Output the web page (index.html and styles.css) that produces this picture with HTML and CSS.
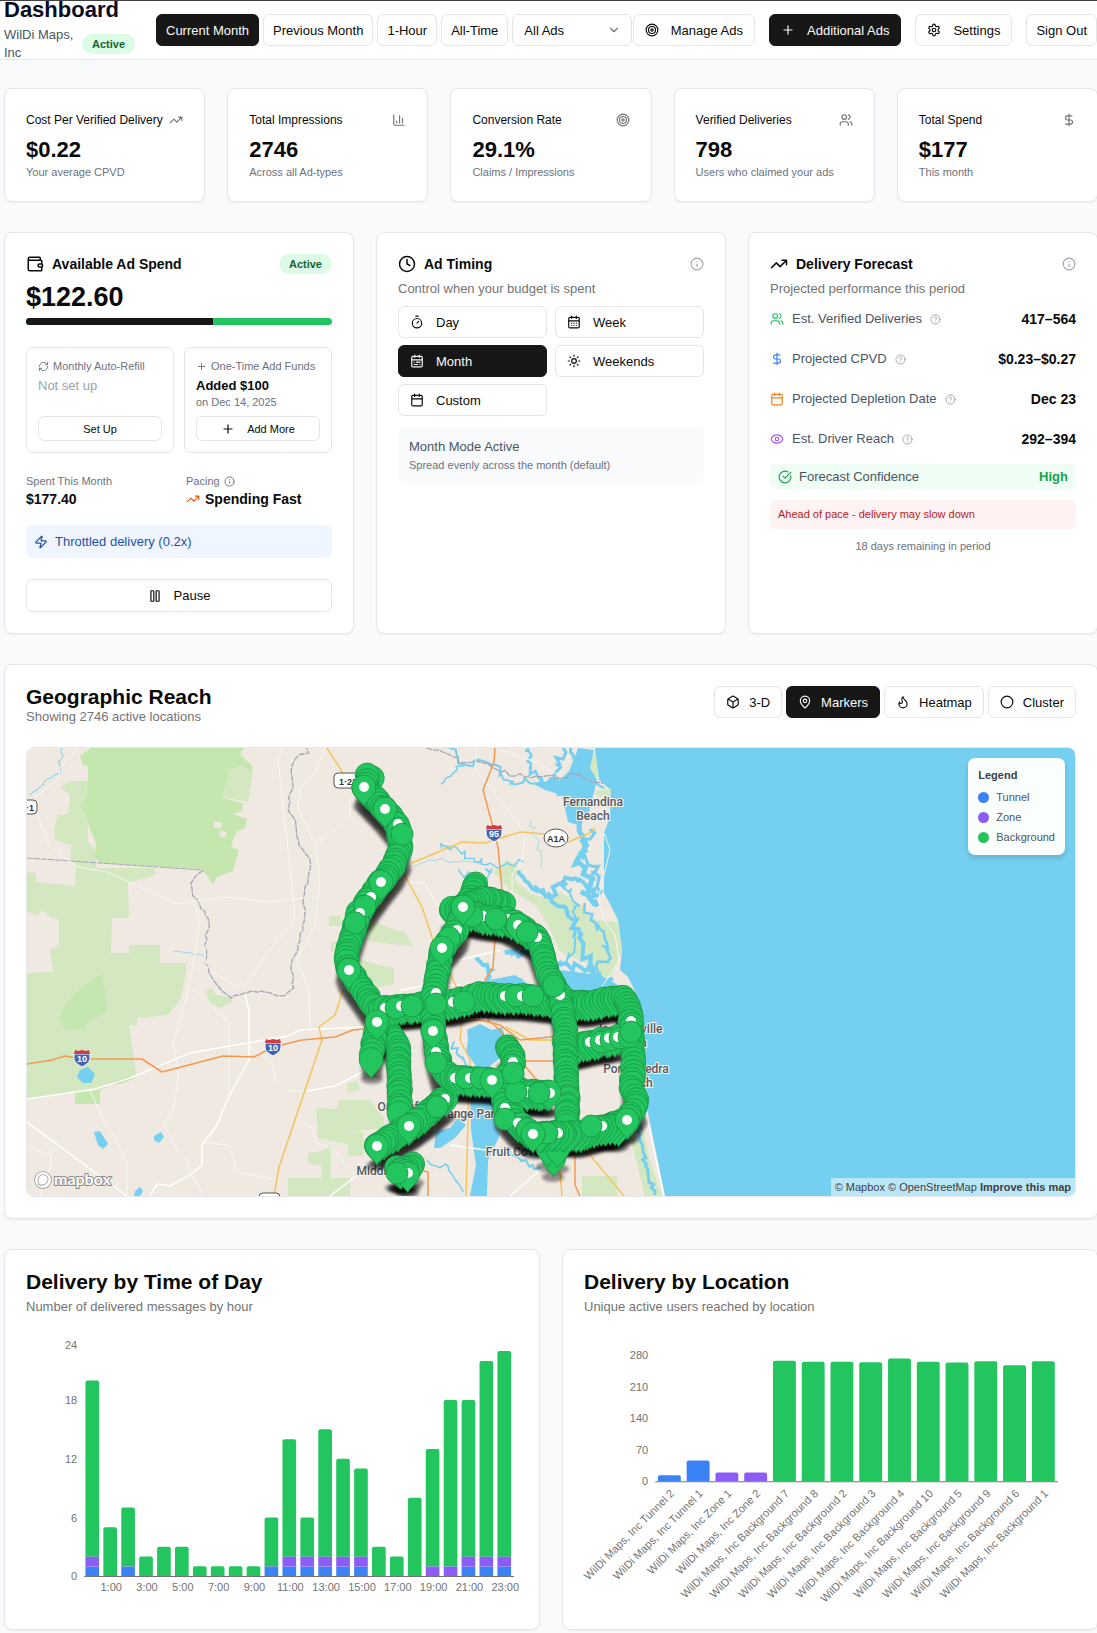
FILE: index.html
```
<!DOCTYPE html>
<html lang="en">

<head>
    <meta charset="utf-8" />
    <title>Dashboard</title>
    <meta name="viewport" content="width=device-width, initial-scale=1.0">
    <link rel="stylesheet" href="styles.css">
</head>

<body>
    <!-- Icon sprite -->
    <svg class="sprite" aria-hidden="true">
        <symbol id="trend" viewBox="0 0 24 24"><path d="M22 7 13.5 15.5 8.5 10.5 2 17M16 7h6v6" /></symbol>
        <symbol id="bars" viewBox="0 0 24 24"><path d="M3 3v16a2 2 0 0 0 2 2h16M18 17V9M13 17V5M8 17v-3" /></symbol>
        <symbol id="target" viewBox="0 0 24 24"><circle cx="12" cy="12" r="10" /><circle cx="12" cy="12" r="6" /><circle cx="12" cy="12" r="2" /></symbol>
        <symbol id="users" viewBox="0 0 24 24"><path d="M16 21v-2a4 4 0 0 0-4-4H6a4 4 0 0 0-4 4v2" /><circle cx="9" cy="7" r="4" /><path d="M22 21v-2a4 4 0 0 0-3-3.87M16 3.13a4 4 0 0 1 0 7.75" /></symbol>
        <symbol id="dollar" viewBox="0 0 24 24"><path d="M12 2v20M17 5H9.5a3.5 3.5 0 0 0 0 7h5a3.5 3.5 0 0 1 0 7H6" /></symbol>
        <symbol id="wallet" viewBox="0 0 24 24"><path d="M19 7V4a1 1 0 0 0-1-1H5a2 2 0 0 0 0 4h15a1 1 0 0 1 1 1v4h-3a2 2 0 0 0 0 4h3a1 1 0 0 0 1-1v-2a1 1 0 0 0-1-1M3 5v14a2 2 0 0 0 2 2h15a1 1 0 0 0 1-1v-4" /></symbol>
        <symbol id="refresh" viewBox="0 0 24 24"><path d="M3 12a9 9 0 0 1 9-9 9.75 9.75 0 0 1 6.74 2.74L21 8M21 3v5h-5M21 12a9 9 0 0 1-9 9 9.75 9.75 0 0 1-6.74-2.74L3 16M8 16H3v5" /></symbol>
        <symbol id="plus" viewBox="0 0 24 24"><path d="M5 12h14M12 5v14" /></symbol>
        <symbol id="info" viewBox="0 0 24 24"><circle cx="12" cy="12" r="10" /><path d="M12 16v-4M12 8h.01" /></symbol>
        <symbol id="help" viewBox="0 0 24 24"><circle cx="12" cy="12" r="10" /><path d="M9.09 9a3 3 0 0 1 5.83 1c0 2-3 3-3 3M12 17h.01" /></symbol>
        <symbol id="zap" viewBox="0 0 24 24"><path d="M4 14a1 1 0 0 1-.78-1.63l9.9-10.2a.5.5 0 0 1 .86.46l-1.92 6.02A1 1 0 0 0 13 10h7a1 1 0 0 1 .78 1.63l-9.9 10.2a.5.5 0 0 1-.86-.46l1.92-6.02A1 1 0 0 0 11 14z" /></symbol>
        <symbol id="pause" viewBox="0 0 24 24"><rect x="14" y="3" width="5" height="18" rx="1" /><rect x="5" y="3" width="5" height="18" rx="1" /></symbol>
        <symbol id="clock" viewBox="0 0 24 24"><circle cx="12" cy="12" r="10" /><path d="M12 6v6l4 2" /></symbol>
        <symbol id="timer" viewBox="0 0 24 24"><path d="M10 2h4M12 14l3-3" /><circle cx="12" cy="14" r="8" /></symbol>
        <symbol id="calendar" viewBox="0 0 24 24"><path d="M8 2v4M16 2v4M3 10h18" /><rect x="3" y="4" width="18" height="18" rx="2" /></symbol>
        <symbol id="calendar-days" viewBox="0 0 24 24"><path d="M8 2v4M16 2v4M3 10h18M8 14h.01M12 14h.01M16 14h.01M8 18h.01M12 18h.01M16 18h.01" /><rect x="3" y="4" width="18" height="18" rx="2" /></symbol>
        <symbol id="calendar-range" viewBox="0 0 24 24"><path d="M8 2v4M16 2v4M3 10h18M17 14h-6M13 18H7M7 14h.01M17 18h.01" /><rect x="3" y="4" width="18" height="18" rx="2" /></symbol>
        <symbol id="sun" viewBox="0 0 24 24"><circle cx="12" cy="12" r="4" /><path d="M12 2v2M12 20v2M4.93 4.93l1.41 1.41M17.66 17.66l1.41 1.41M2 12h2M20 12h2M6.34 17.66l-1.41 1.41M19.07 4.93l-1.41 1.41" /></symbol>
        <symbol id="eye" viewBox="0 0 24 24"><path d="M2.06 12.35a1 1 0 0 1 0-.7 10.75 10.75 0 0 1 19.88 0 1 1 0 0 1 0 .7 10.75 10.75 0 0 1-19.88 0" /><circle cx="12" cy="12" r="3" /></symbol>
        <symbol id="check" viewBox="0 0 24 24"><path d="M21.8 10A10 10 0 1 1 17 3.34M9 11l3 3L22 4" /></symbol>
        <symbol id="box" viewBox="0 0 24 24"><path d="M21 8a2 2 0 0 0-1-1.73l-7-4a2 2 0 0 0-2 0l-7 4A2 2 0 0 0 3 8v8a2 2 0 0 0 1 1.73l7 4a2 2 0 0 0 2 0l7-4A2 2 0 0 0 21 16ZM3.3 7l8.7 5 8.7-5M12 22V12" /></symbol>
        <symbol id="pin" viewBox="0 0 24 24"><path d="M20 10c0 5-5.54 10.2-7.4 11.8a1 1 0 0 1-1.2 0C9.54 20.2 4 15 4 10a8 8 0 0 1 16 0" /><circle cx="12" cy="10" r="3" /></symbol>
        <symbol id="flame" viewBox="0 0 24 24"><path d="M8.5 14.5A2.5 2.5 0 0 0 11 12c0-1.38-.5-2-1-3-1.07-2.14-.22-4.05 2-6 .5 2.5 2 4.9 4 6.5 2 1.6 3 3.5 3 5.5a7 7 0 1 1-14 0c0-1.15.43-2.29 1-3a2.5 2.5 0 0 0 2.5 2.5z" /></symbol>
        <symbol id="circle" viewBox="0 0 24 24"><circle cx="12" cy="12" r="10" /></symbol>
        <symbol id="chevron" viewBox="0 0 24 24"><path d="m6 9 6 6 6-6" /></symbol>
        <symbol id="gear" viewBox="0 0 24 24"><path d="M12.22 2h-.44a2 2 0 0 0-2 2v.18a2 2 0 0 1-1 1.73l-.43.25a2 2 0 0 1-2 0l-.15-.08a2 2 0 0 0-2.73.73l-.22.38a2 2 0 0 0 .73 2.73l.15.1a2 2 0 0 1 1 1.72v.51a2 2 0 0 1-1 1.74l-.15.09a2 2 0 0 0-.73 2.73l.22.38a2 2 0 0 0 2.73.73l.15-.08a2 2 0 0 1 2 0l.43.25a2 2 0 0 1 1 1.73V20a2 2 0 0 0 2 2h.44a2 2 0 0 0 2-2v-.18a2 2 0 0 1 1-1.73l.43-.25a2 2 0 0 1 2 0l.15.08a2 2 0 0 0 2.73-.73l.22-.39a2 2 0 0 0-.73-2.73l-.15-.08a2 2 0 0 1-1-1.74v-.5a2 2 0 0 1 1-1.74l.15-.09a2 2 0 0 0 .73-2.73l-.22-.38a2 2 0 0 0-2.73-.73l-.15.08a2 2 0 0 1-2 0l-.43-.25a2 2 0 0 1-1-1.73V4a2 2 0 0 0-2-2z" /><circle cx="12" cy="12" r="3" /></symbol>
    </svg>

    <header class="topbar">
        <div class="brand">
            <h1>Dashboard</h1>
            <div class="account">
                <span class="account-name">WilDi Maps, Inc</span>
                <span class="badge">Active</span>
            </div>
        </div>
        <div class="filters">
            <button class="btn dark">Current Month</button>
            <button class="btn">Previous Month</button>
            <button class="btn">1-Hour</button>
            <button class="btn">All-Time</button>
            <div class="select-wrap">
                <select class="btn" aria-label="Ad type">
                    <option>All Ads</option>
                </select>
                <svg class="icon muted"><use href="#chevron" /></svg>
            </div>
        </div>
        <div class="actions">
            <button class="btn with-icon"><svg class="icon"><use href="#target" /></svg>Manage Ads</button>
            <button class="btn with-icon dark"><svg class="icon"><use href="#plus" /></svg>Additional Ads</button>
            <button class="btn with-icon"><svg class="icon"><use href="#gear" /></svg>Settings</button>
            <button class="btn">Sign Out</button>
        </div>
    </header>

    <main>
        <!-- Stats -->
        <section class="row stats">
            <div class="card">
                <div class="stat-head">Cost Per Verified Delivery<svg class="icon muted"><use href="#trend" /></svg></div>
                <div class="stat-value">$0.22</div>
                <div class="small">Your average CPVD</div>
            </div>
            <div class="card">
                <div class="stat-head">Total Impressions<svg class="icon muted"><use href="#bars" /></svg></div>
                <div class="stat-value">2746</div>
                <div class="small">Across all Ad-types</div>
            </div>
            <div class="card">
                <div class="stat-head">Conversion Rate<svg class="icon muted"><use href="#target" /></svg></div>
                <div class="stat-value">29.1%</div>
                <div class="small">Claims / Impressions</div>
            </div>
            <div class="card">
                <div class="stat-head">Verified Deliveries<svg class="icon muted"><use href="#users" /></svg></div>
                <div class="stat-value">798</div>
                <div class="small">Users who claimed your ads</div>
            </div>
            <div class="card">
                <div class="stat-head">Total Spend<svg class="icon muted"><use href="#dollar" /></svg></div>
                <div class="stat-value">$177</div>
                <div class="small">This month</div>
            </div>
        </section>

        <section class="row">
            <!-- Ad spend -->
            <div class="card">
                <div class="card-head">
                    <svg class="icon large"><use href="#wallet" /></svg>
                    <h2>Available Ad Spend</h2>
                    <span class="badge">Active</span>
                </div>
                <div class="amount">$122.60</div>
                <div class="progress"><div class="progress-fill" style="width: 61%"></div></div>
                <div class="funds">
                    <div class="fund">
                        <div class="small"><svg class="icon tiny"><use href="#refresh" /></svg>Monthly Auto-Refill</div>
                        <div class="fund-value unset">Not set up</div>
                        <button class="btn compact">Set Up</button>
                    </div>
                    <div class="fund">
                        <div class="small"><svg class="icon tiny"><use href="#plus" /></svg>One-Time Add Funds</div>
                        <div class="fund-value">Added $100</div>
                        <div class="small">on Dec 14, 2025</div>
                        <button class="btn compact with-icon"><svg class="icon"><use href="#plus" /></svg>Add More</button>
                    </div>
                </div>
                <div class="pacing">
                    <div>
                        <div class="small">Spent This Month</div>
                        <div class="strong">$177.40</div>
                    </div>
                    <div>
                        <div class="small">Pacing<svg class="icon tiny"><use href="#info" /></svg></div>
                        <div class="strong"><svg class="icon fast"><use href="#trend" /></svg>Spending Fast</div>
                    </div>
                </div>
                <div class="throttled"><svg class="icon"><use href="#zap" /></svg>Throttled delivery (0.2x)</div>
                <button class="btn pause with-icon"><svg class="icon"><use href="#pause" /></svg>Pause</button>
            </div>

            <!-- Ad timing -->
            <div class="card">
                <div class="card-head">
                    <svg class="icon large"><use href="#clock" /></svg>
                    <h2>Ad Timing</h2>
                    <svg class="icon hint"><use href="#info" /></svg>
                </div>
                <p class="sub">Control when your budget is spent</p>
                <div class="timing">
                    <button class="btn with-icon"><svg class="icon"><use href="#timer" /></svg>Day</button>
                    <button class="btn with-icon"><svg class="icon"><use href="#calendar-days" /></svg>Week</button>
                    <button class="btn with-icon dark"><svg class="icon"><use href="#calendar-range" /></svg>Month</button>
                    <button class="btn with-icon"><svg class="icon"><use href="#sun" /></svg>Weekends</button>
                    <button class="btn with-icon"><svg class="icon"><use href="#calendar" /></svg>Custom</button>
                </div>
                <div class="mode">
                    <div>Month Mode Active</div>
                    <div class="small">Spread evenly across the month (default)</div>
                </div>
            </div>

            <!-- Forecast -->
            <div class="card">
                <div class="card-head">
                    <svg class="icon large"><use href="#trend" /></svg>
                    <h2>Delivery Forecast</h2>
                    <svg class="icon hint"><use href="#info" /></svg>
                </div>
                <p class="sub">Projected performance this period</p>
                <dl class="forecast">
                    <div>
                        <dt><svg class="icon green"><use href="#users" /></svg>Est. Verified Deliveries<svg class="icon tiny"><use href="#help" /></svg></dt>
                        <dd>417–564</dd>
                    </div>
                    <div>
                        <dt><svg class="icon blue"><use href="#dollar" /></svg>Projected CPVD<svg class="icon tiny"><use href="#help" /></svg></dt>
                        <dd>$0.23–$0.27</dd>
                    </div>
                    <div>
                        <dt><svg class="icon orange"><use href="#calendar" /></svg>Projected Depletion Date<svg class="icon tiny"><use href="#help" /></svg></dt>
                        <dd>Dec 23</dd>
                    </div>
                    <div>
                        <dt><svg class="icon purple"><use href="#eye" /></svg>Est. Driver Reach<svg class="icon tiny"><use href="#help" /></svg></dt>
                        <dd>292–394</dd>
                    </div>
                </dl>
                <div class="confidence"><svg class="icon"><use href="#check" /></svg>Forecast Confidence<b>High</b></div>
                <div class="warning">Ahead of pace - delivery may slow down</div>
                <div class="small remaining">18 days remaining in period</div>
            </div>
        </section>

        <!-- Map -->
        <section class="card">
            <div class="geo-head">
                <div>
                    <h2 class="title">Geographic Reach</h2>
                    <p class="sub">Showing 2746 active locations</p>
                </div>
                <div class="filters">
                    <button class="btn with-icon"><svg class="icon"><use href="#box" /></svg>3-D</button>
                    <button class="btn with-icon dark"><svg class="icon"><use href="#pin" /></svg>Markers</button>
                    <button class="btn with-icon"><svg class="icon"><use href="#flame" /></svg>Heatmap</button>
                    <button class="btn with-icon"><svg class="icon"><use href="#circle" /></svg>Cluster</button>
                </div>
            </div>
            <div class="map">
                <svg class="map-canvas" id="map" viewBox="27 748 1048 448" preserveAspectRatio="xMidYMid slice">
                    <defs>
                        <filter id="soft" x="-5%" y="-5%" width="110%" height="110%"><feGaussianBlur stdDeviation="1.5" /></filter>
                        <g id="shield">
                            <path class="shield-blue" d="M-8 -3V1C-8 6-3 8 0 10C3 8 8 6 8 1V-3Z" />
                            <path class="shield-red" d="M-8 -3L-7 -7 -4 -6 0 -7 4 -6 7 -7 8 -3Z" />
                        </g>
                    </defs>
                    <!-- Parks -->
                    <g class="park">
                        <path d="M60 787L70 781H88V842L96 850V868H77L70 858 71 845 55 840 54 828 58 815 68 814 70 795Z" />
                        <path d="M241 765L253 772 248 802 222 797 229 770Z" />
                        <path fill-rule="evenodd" d="M27 872L36 873V882L75 886 76 868 155 868V875L128 883 129 918H112L111 953H129V945H160V963H186V975L180 1000 172 1010 168 1015 137 1018V1025H129L136 1075 100 1090V1104H75V1093L27 1099ZM27 912L38 915 42 910 52 918 59 920V945L50 950 53 972 27 973Z" />
                        <path d="M205 990L212 988 216 995 230 997 232 1002 220 1008 210 1003Z" />
                        <path d="M329 916H341V926H329ZM340 935L365 928 375 922 395 930 405 932 413 946 390 944 370 941 362 937ZM331 942H342V952H331ZM357 958L375 964 394 968V984L375 988 350 975Z" />
                        <path d="M316 1108L337 1109 339 1100H370L384 1118V1128L350 1132V1145L333 1141 318 1138ZM308 1153L322 1151 331 1145V1178H322V1166L308 1163ZM348 1132H363V1156H348ZM288 1178H350V1196H288ZM582 1176H617V1196H582ZM347 1084L358 1081 360 1090 348 1093Z" />
                        <path d="M494 873L506 860 518 865 515 880 530 893 550 900 560 892 580 905 596 920 617 922 622 950 612 975 600 980 585 962 560 952 548 925 535 905 510 890ZM594 791L611 789V796L596 796ZM588 765L597 748V780L590 778ZM631 1140L642 1125 650 1160 662 1196H645Z" />
                    </g>
                    <g class="forest">
                        <path d="M91 748L80 756 82 764 88 767V780L87 795 80 806 86 815 90 830 96 843 95 857 100 863 202 869 213 884 217 877 233 871 239 850 231 847 236 832 245 828 247 819 233 814 242 811 243 803 222 798 229 770 241 765 253 772 252 765 240 755 244 748Z" />
                        <path d="M58 1019L66 1003 78 990 102 973 108 1012 88 1022 84 1029 65 1030ZM106 1084L128 1076 136 1078 120 1084ZM75 1093L100 1090V1104H75Z" />
                    </g>
                    <path class="land" d="M214 821L222 823 220 829 214 827ZM221 830L227 833 225 838 219 836Z" />
                    <!-- Water -->
                    <g class="water">
                        <path d="M595 748L599 780 611 790 610 817 604 833 604 893 609 902 618 920 622 950 620 970 628 977 638 997 641 1050 648 1113 665 1196H1075V748Z" />
                        <path d="M578 748L594 750 590 768 597 780 592 800 588 815 578 825 568 822 562 795 545 790 532 783 560 780 570 770Z" />
                        <path d="M80 1070L88 1067 95 1074 91 1083 83 1083 77 1077ZM94 1132L100 1131 108 1144 103 1149 98 1145ZM154 1136L161 1132 164 1137 159 1143 154 1140ZM135 1191L140 1187 143 1191 140 1196H134Z" />
                        <path d="M467 1030L480 1024 492 1030 502 1027 506 1040 500 1058 490 1066 480 1080 476 1066 466 1052 468 1040ZM470 1095H500L496 1125 500 1135 488 1160 487 1196H470L476 1165 471 1130ZM436 1131L450 1128 458 1118 466 1125 455 1138 440 1148 434 1148Z" />
                        <path d="M490 980L515 975 530 985 545 985 560 970 600 975 618 985 605 995 570 990 520 1000Z" />
                    </g>
                    <g id="creeks" class="creeks"></g>
                    <g id="borders" class="borders"></g>
                    <!-- Roads -->
                    <g class="road minor">
                        <path d="M77 748L60 768 58 780 37 795 31 803M37 815L50 847 78 867 107 872 177 904 225 897 268 902 295 899 318 896" />
                        <path d="M283 748L278 760 294 905 295 918 266 955 242 990M325 748L316 770 300 790 298 810 315 843 320 880 315 925 297 960 309 990 310 1030M315 845L340 825 350 815V800L400 793" />
                        <path d="M194 903L200 920 192 970 182 1015 173 1045 179 1075 173 1110 164 1125 178 1152 188 1160 190 1172 203 1195M205 945V965L240 990M192 988L229 1022V1093M90 1090L103 1120 116 1140 127 1165V1196M27 1146L46 1154 57 1148M51 1153V1165L40 1196M247 1045L272 1062 275 1080 288 1091 307 1091M205 1143L229 1145 237 1172 278 1180M297 1121L312 1127 316 1142 334 1150 355 1175" />
                        <path d="M477 748L475 770 500 800 525 833 522 860 512 875V900M400 867L405 882 425 883 440 910M500 750L530 760 560 775M604 833L610 850 598 900 604 920 615 935 619 960 600 990" />
                    </g>
                    <g class="road main">
                        <path d="M27 1099L95 1089 130 1078 190 1053 230 1046 288 1036 300 1030 385 1026M245 995L249 1010V1060L235 1085 225 1105 217 1125 202 1145V1165L190 1175 170 1186 157 1184 150 1196M27 1122L127 1196M307 1091L335 1086 370 1068" />
                        <path d="M400 990L430 985 460 985M430 950L460 960 500 950M450 1145L500 1152 560 1140M330 1196L390 1150M510 1196L540 1170 590 1150" />
                        <path d="M646 1112L664 1196" />
                    </g>
                    <g class="road yellow">
                        <path d="M327 748L343 773M343 990L335 1015 319 1027 322 1040 279 1167 274 1196M412 863L462 842 485 843 520 832 557 835 568 842 590 833 595 828" />
                        <path d="M404 874L422 907 433 940 458 990 462 1020 460 1040 470 1060 468 1120 466 1196M560 1120L590 1155 624 1196M506 1027L530 1040 565 1040M558 1150L562 1196" />
                    </g>
                    <g class="road interstate">
                        <path d="M27 1064L52 1060 65 1056 82 1059H142L162 1072 223 1056 254 1057 273 1047 302 1040 335 1037 353 1030 400 1026 480 1020 500 1025 520 1040 560 1036" />
                        <path d="M495 748L494 762 483 790 493 827 498 847 502 890 495 937 493 967 485 980 488 1020 500 1030 520 1060 545 1090M575 1156V1185L580 1196M400 1165L428 1172V1196M525 1061H560" />
                    </g>
                    <!-- Road shields -->
                    <g class="shield-text">
                        <use href="#shield" x="82" y="1057" /><text x="82" y="1062">10</text>
                        <use href="#shield" x="273" y="1046" /><text x="273" y="1051">10</text>
                        <use href="#shield" x="494" y="832" /><text x="494" y="837">95</text>
                    </g>
                    <g class="plate">
                        <rect x="334" y="773" width="26" height="15" rx="4" /><text x="348" y="785">1·23</text>
                        <rect x="20" y="800" width="17" height="14" rx="4" /><text x="30" y="811">·1</text>
                        <rect x="259" y="1193" width="21" height="14" rx="4" />
                        <ellipse cx="556" cy="838" rx="12" ry="9" /><text x="556" y="842">A1A</text>
                    </g>
                    <!-- Places -->
                    <g class="place">
                        <text x="593" y="806">Fernandina</text>
                        <text x="593" y="820">Beach</text>
                        <text x="629" y="1033">Jacksonville</text>
                        <text x="630" y="1047">Beach</text>
                        <text x="636" y="1073">Ponte Vedra</text>
                        <text x="636" y="1087">Beach</text>
                        <text x="398" y="1111">Oakleaf</text>
                        <text x="468" y="1118">Orange Park</text>
                        <text x="513" y="1156">Fruit Cove</text>
                        <text x="387" y="1175">Middleburg</text>
                        <text class="city" x="495" y="1018">Jacksonville</text>
                    </g>
                    <g id="shadows" class="shadows" filter="url(#soft)"></g>
                    <g id="pins" class="pins"></g>
                    <!-- Provider logo -->
                    <g class="provider">
                        <circle cx="43" cy="1180" r="8" />
                        <path d="M39 1184C37 1177 40 1175 44 1175C48 1176 49 1180 46 1183C44 1185 41 1185 39 1184ZM44 1177V1182M41 1180H47" />
                        <text x="54" y="1185">mapbox</text>
                    </g>
                </svg>
                <div class="legend">
                    <b>Legend</b>
                    <span><i class="dot tunnel"></i>Tunnel</span>
                    <span><i class="dot zone"></i>Zone</span>
                    <span><i class="dot background"></i>Background</span>
                </div>
                <div class="attribution">
                    <a href="#">© Mapbox</a> <a href="#">© OpenStreetMap</a> <a href="#"><b>Improve this map</b></a>
                </div>
            </div>
        </section>

        <!-- Charts -->
        <section class="row">
            <div class="card">
                <h2 class="title tall">Delivery by Time of Day</h2>
                <p class="sub">Number of delivered messages by hour</p>
                <svg class="chart" id="hour-chart" viewBox="0 0 490 291"></svg>
            </div>
            <div class="card">
                <h2 class="title tall">Delivery by Location</h2>
                <p class="sub">Unique active users reached by location</p>
                <svg class="chart" id="location-chart" viewBox="0 0 490 291"></svg>
            </div>
        </section>
    </main>
    <script src="dashboard.js"></script>
</body>

</html>
```
FILE: styles.css
```
* {
    box-sizing: border-box;
    margin: 0;
    padding: 0;
}

body {
    background-color: #f9fafb;
    color: #0a0a0a;
    font-family: "Liberation Sans", Arial, sans-serif;
    font-size: 13px;
    line-height: 18px;
    overflow-x: hidden;
}

.sprite {
    display: none;
}

.icon {
    width: 14px;
    height: 14px;
    flex: none;
    fill: none;
    stroke: currentColor;
    stroke-width: 2;
    stroke-linecap: round;
    stroke-linejoin: round;
}

.icon.large {
    width: 18px;
    height: 18px;
}

.icon.tiny {
    width: 11px;
    height: 11px;
}

.muted {
    color: #737373;
}

.green {
    color: #22c55e;
}

.blue {
    color: #3b82f6;
}

.orange {
    color: #f58220;
}

.purple {
    color: #a855f7;
}

.small {
    display: flex;
    align-items: center;
    gap: 4px;
    color: #6b7280;
    font-size: 11px;
    line-height: 15px;
}

.badge {
    padding: 0 10px;
    border-radius: 10px;
    background-color: #dcfce7;
    color: #166534;
    font-size: 11px;
    font-weight: bold;
    line-height: 20px;
}

/* Buttons */
.btn {
    display: flex;
    align-items: center;
    justify-content: center;
    height: 32px;
    padding: 0 9px;
    border: 1px solid #e5e5e5;
    border-radius: 6px;
    background-color: white;
    color: #0a0a0a;
    font-family: inherit;
    font-size: 13px;
    white-space: nowrap;
}

.btn.with-icon {
    gap: 12px;
    padding: 0 11px;
}

.btn.dark {
    border-color: #171717;
    background-color: #171717;
    color: #fafafa;
}

.btn.compact {
    height: 25px;
    margin-top: auto;
    font-size: 11px;
}

/* Top bar */
.topbar {
    display: flex;
    align-items: center;
    height: 60px;
    padding-left: 4px;
    border-top: 1px solid #404040;
    border-bottom: 1px solid #e5e7eb;
    background-color: white;
}

.brand {
    flex: 0 0 152px;
}

.brand h1 {
    margin-bottom: 4px;
    color: #0a0a23;
    font-size: 22px;
    line-height: 24px;
}

.account {
    display: flex;
    align-items: center;
    gap: 8px;
    color: #4b5563;
}

.account-name {
    flex: 0 0 70px;
}

.filters {
    display: flex;
    gap: 4px;
}

.topbar .filters {
    flex: 1;
}

.select-wrap {
    position: relative;
    flex: 1;
    min-width: 100px;
    margin-right: 1px;
}

.select-wrap select {
    width: 100%;
    padding: 0 11px;
    appearance: none;
}

.select-wrap .icon {
    position: absolute;
    top: 9px;
    right: 11px;
    pointer-events: none;
}

.actions {
    display: flex;
    gap: 14px;
}

/* Cards */
main {
    display: flex;
    flex-direction: column;
    gap: 30px;
    margin-right: -1px;
    padding: 28px 0 4px 4px;
}

.row {
    display: flex;
    gap: 22px;
}

.row > .card {
    flex: 1 1 0;
    min-width: 0;
}

.card {
    padding: 21px;
    border: 1px solid #e5e7eb;
    border-radius: 8px;
    background-color: white;
    box-shadow: 0 1px 2px rgba(0, 0, 0, 0.05);
}

.stats .card {
    padding: 22px 21px 21px;
}

.stat-head {
    display: flex;
    align-items: center;
    justify-content: space-between;
    font-size: 12px;
    white-space: nowrap;
}

.stat-value {
    margin: 7px 0 1px;
    font-size: 22px;
    font-weight: bold;
    line-height: 28px;
}

.card-head {
    display: flex;
    align-items: center;
    gap: 8px;
    height: 20px;
}

.card-head h2 {
    flex: 1;
    font-size: 14px;
}

.hint {
    color: #9ca3af;
}

.sub {
    color: #737373;
}

.card-head + .sub {
    margin: 6px 0 8px;
}

/* Ad spend */
.amount {
    margin: 5px 0 3px;
    font-size: 27px;
    font-weight: bold;
    line-height: 36px;
}

.progress {
    height: 7px;
    border-radius: 4px;
    background-color: #22c55e;
    overflow: hidden;
}

.progress-fill {
    height: 100%;
    background-color: #171717;
}

.funds {
    display: flex;
    gap: 10px;
    margin: 22px 0 21px;
}

.fund {
    display: flex;
    flex: 1 1 0;
    flex-direction: column;
    height: 106px;
    padding: 11px;
    border: 1px solid #e5e5e5;
    border-radius: 7px;
    white-space: nowrap;
}

.fund-value {
    margin-top: 3px;
    font-weight: bold;
}

.fund-value.unset {
    color: #9ca3af;
    font-weight: normal;
}

.pacing {
    display: grid;
    grid-template-columns: 1fr 1fr;
    gap: 14px;
}

.strong {
    display: flex;
    align-items: center;
    gap: 5px;
    margin-top: 1px;
    font-size: 14px;
    font-weight: bold;
}

.fast {
    color: #ea580c;
}

.throttled {
    display: flex;
    align-items: center;
    gap: 7px;
    height: 33px;
    margin: 17px 0 21px;
    padding: 0 8px;
    border-radius: 6px;
    background-color: #eff6ff;
    color: #1e50ab;
}

.pause {
    width: 100%;
    height: 33px;
}

/* Ad timing */
.timing {
    display: grid;
    grid-template-columns: 1fr 1fr;
    gap: 7px 8px;
}

.timing .btn {
    justify-content: flex-start;
}

.mode {
    display: flex;
    flex-direction: column;
    gap: 2px;
    margin-top: 12px;
    padding: 10px 11px;
    border-radius: 6px;
    background-color: #f9fafb;
    color: #4b5563;
}

/* Forecast */
.forecast {
    display: flex;
    flex-direction: column;
    gap: 20px;
    margin-top: 11px;
}

.forecast div,
.forecast dt {
    display: flex;
    align-items: center;
    gap: 8px;
    height: 20px;
    color: #4b5563;
}

.forecast .tiny {
    color: #9ca3af;
}

.forecast dd {
    margin-left: auto;
    color: #0a0a0a;
    font-size: 14px;
    font-weight: bold;
}

.confidence {
    display: flex;
    align-items: center;
    gap: 7px;
    height: 25px;
    margin: 15px 0 11px;
    padding: 0 8px;
    border-radius: 6px;
    background-color: #f0fdf4;
    color: #4b5563;
}

.confidence .icon,
.confidence b {
    color: #16a34a;
}

.confidence b {
    margin-left: auto;
}

.warning {
    padding: 7px 8px;
    border-radius: 6px;
    background-color: #fef2f2;
    color: #b91c1c;
    font-size: 11px;
    line-height: 15px;
}

.remaining {
    justify-content: center;
    margin-top: 10px;
}

/* Map */
.geo-head {
    display: flex;
    justify-content: space-between;
    margin-bottom: 21px;
}

.geo-head .btn {
    gap: 9px;
}

.title {
    font-size: 21px;
    line-height: 22px;
}

.title.tall {
    margin-bottom: 5px;
}

.map {
    position: relative;
    border: 1px solid #e5e7eb;
    border-radius: 8px;
    overflow: hidden;
}

.map-canvas {
    display: block;
    width: 100%;
    background-color: #efe9e1;
}

.land {
    fill: #efe9e1;
}

.park {
    fill: #d3e8c1;
}

.forest {
    fill: #c5e6ae;
}

.water {
    fill: #75cff0;
}

.creeks {
    fill: none;
    stroke: #75cff0;
}

.borders {
    fill: none;
    stroke: #a3a6b4;
    stroke-dasharray: 6 1;
}

.road {
    fill: none;
    stroke-linejoin: round;
}

.minor {
    stroke: #f9f6f2;
    stroke-width: 1;
}

.main {
    stroke: white;
    stroke-width: 1.5;
}

.yellow {
    stroke: #f3c55c;
    stroke-width: 1.5;
}

.interstate {
    stroke: #f3994f;
    stroke-width: 1.5;
}

.shield-blue {
    fill: #4264b4;
    stroke: white;
}

.shield-red {
    fill: #d13b44;
}

.shield-text text {
    fill: white;
    font-size: 9px;
    font-weight: bold;
    text-anchor: middle;
}

.plate {
    fill: white;
    stroke: #555;
}

.plate text {
    fill: #333;
    stroke: none;
    font-size: 9px;
    font-weight: bold;
    text-anchor: middle;
}

.place {
    fill: #55575f;
    stroke: #f6f3ef;
    stroke-width: 2;
    paint-order: stroke;
    font-family: Roboto, sans-serif;
    font-size: 12px;
    font-weight: 500;
    text-anchor: middle;
}

.place .city {
    fill: #222;
    font-size: 15px;
    font-weight: bold;
}

.shadows {
    fill: black;
    fill-opacity: 0.4;
}

.pins {
    fill: #22c55e;
    stroke: #189645;
    stroke-width: 0.8;
}

.pins .hole {
    fill: white;
    stroke: none;
}

.provider {
    fill: white;
    stroke: #8c8c8c;
    stroke-width: 1.5;
    paint-order: stroke;
}

.provider text {
    stroke-width: 2;
    font-family: Lato, sans-serif;
    font-size: 16px;
    font-weight: bold;
}

.legend {
    position: absolute;
    top: 10px;
    right: 10px;
    display: flex;
    flex-direction: column;
    gap: 5px;
    padding: 10px;
    border-radius: 7px;
    background-color: #fafffe;
    box-shadow: 0 3px 5px rgba(0, 0, 0, 0.15);
    color: #4b5563;
    font-size: 11px;
    line-height: 15px;
}

.legend b {
    margin-bottom: 2px;
    color: #374151;
}

.legend span {
    display: flex;
    align-items: center;
    gap: 7px;
}

.dot {
    width: 11px;
    height: 11px;
    border-radius: 50%;
}

.tunnel {
    background-color: #3b82f6;
    fill: #3b82f6;
}

.zone {
    background-color: #8b5cf6;
    fill: #8b5cf6;
}

.background {
    background-color: #22c55e;
    fill: #22c55e;
}

.attribution {
    position: absolute;
    right: 0;
    bottom: 0;
    padding: 0 4px;
    background-color: rgba(255, 255, 255, 0.5);
    font-size: 11px;
}

.attribution a {
    color: #404040;
    text-decoration: none;
}

/* Charts */
.chart {
    display: block;
    width: 100%;
    overflow: visible;
}

.chart text {
    fill: #737373;
    font-size: 11px;
}

.chart .end {
    text-anchor: end;
}

.chart .middle {
    text-anchor: middle;
}

.axis {
    stroke: #737373;
}
```
FILE: dashboard.js
```
const SVG_NS = "http://www.w3.org/2000/svg";

function add(parent, tag, attrs, text) {
    const el = document.createElementNS(SVG_NS, tag);
    for (const key in attrs) el.setAttribute(key, attrs[key]);
    if (text !== undefined) el.textContent = text;
    parent.appendChild(el);
    return el;
}

// Bar with rounded top corners
function bar(parent, x, y, w, h, r, cls) {
    add(parent, "path", {
        class: cls,
        d: `M${x} ${y + h}V${y + r}q0 ${-r} ${r} ${-r}h${w - 2 * r}q${r} 0 ${r} ${r}V${y + h}Z`
    });
}

// ---- Delivery by time of day: [tunnel, zone, background] per hour
const hours = [
    [1, 1, 18], [0, 0, 5], [1, 0, 6], [0, 0, 2], [0, 0, 3], [0, 0, 3],
    [0, 0, 1], [0, 0, 1], [0, 0, 1], [0, 0, 1], [1, 0, 5], [1, 1, 12],
    [1, 1, 4], [1, 1, 13], [1, 1, 10], [1, 1, 9], [0, 0, 3], [0, 0, 2],
    [0, 0, 8], [0, 1, 12], [0, 1, 17], [1, 1, 16], [1, 1, 20], [1, 1, 21]
];
const hourChart = document.getElementById("hour-chart");
const types = ["tunnel", "zone", "background"];
const unit = 9.74;
hours.forEach((counts, i) => {
    const center = 66 + i * 17.84;
    let y = 259;
    counts.forEach((n, t) => {
        if (!n) return;
        y -= n * unit;
        bar(hourChart, center - 6.8, y, 13.6, n * unit, t === 2 ? 2 : 0, types[t]);
        if (t < 2) add(hourChart, "path", { d: `M${center - 6.8} ${y}h13.6`, stroke: "#a99bf8" });
    });
    if (i % 2) add(hourChart, "text", { x: center + 1, y: 274, class: "middle" }, i + ":00");
});
add(hourChart, "path", { class: "axis", d: "M58 259.5H486" });
[[24, 29], [18, 84], [12, 142], [6, 201], [0, 259]].forEach(([n, y]) => {
    add(hourChart, "text", { x: 51, y: y + 4, class: "end" }, n);
});

// ---- Delivery by location
const locations = [
    ["Tunnel 2", 13], ["Tunnel 1", 46], ["Zone 1", 19], ["Zone 2", 19],
    ["Background 7", 267], ["Background 8", 265], ["Background 2", 265],
    ["Background 3", 264], ["Background 4", 272], ["Background 10", 265],
    ["Background 5", 263], ["Background 9", 266], ["Background 6", 257],
    ["Background 1", 266]
];
const locationChart = document.getElementById("location-chart");
add(locationChart, "path", { class: "axis", d: "M71 165H472" });
locations.forEach(([name, n], i) => {
    const center = 85 + i * 28.65;
    const h = n * 0.449;
    bar(locationChart, center - 11.4, 164.5 - h, 22.8, h, 2, name.split(" ")[0].toLowerCase());
    add(locationChart, "text", {
        class: "end",
        dy: "0.71em",
        transform: `translate(${center} 172) rotate(-45)`
    }, "WilDi Maps, Inc " + name);
});
[280, 210, 140, 70, 0].forEach((n, i) => {
    add(locationChart, "text", { x: 64, y: 43 + i * 31.4, class: "end" }, n);
});

// ---- Map
let seed = 7;
function random() {
    seed = (seed * 16807) % 2147483647;
    return seed / 2147483647 - 0.5;
}

// Walks a polyline in steps and calls fn on each point
function walk(points, step, fn) {
    for (let i = 0; i < points.length - 1; i++) {
        const [x1, y1] = points[i];
        const [x2, y2] = points[i + 1];
        const count = Math.max(1, Math.round(Math.hypot(x2 - x1, y2 - y1) / step));
        for (let k = 0; k < count; k++) {
            fn(x1 + (x2 - x1) * k / count, y1 + (y2 - y1) * k / count);
        }
    }
    fn(...points[points.length - 1]);
}

function wiggle(parent, points, step, amount, width) {
    const out = [];
    walk(points, step, (x, y) => {
        out.push((x + random() * amount).toFixed(1) + " " + (y + random() * amount).toFixed(1));
    });
    add(parent, "path", { d: "M" + out.join("L"), "stroke-width": width });
}

const creeks = document.getElementById("creeks");
[
    [[[530, 748], [528, 770], [545, 785], [565, 790]], 9, 2.5],
    [[[563, 748], [556, 775], [548, 785]], 9, 3],
    [[[572, 748], [570, 780], [560, 795]], 8, 3],
    [[[448, 750], [465, 762], [490, 765], [515, 780], [550, 782], [600, 784]], 9, 2],
    [[[575, 820], [585, 845], [578, 862], [590, 875], [585, 895], [600, 905]], 9, 5],
    [[[592, 830], [582, 850], [600, 880], [598, 893]], 9, 3],
    [[[515, 868], [530, 885], [550, 895], [565, 878], [580, 882], [600, 900]], 8, 4],
    [[[440, 845], [470, 858], [500, 868], [520, 862]], 9, 1.5],
    [[[455, 870], [475, 880], [495, 870]], 10, 1.5],
    [[[550, 895], [570, 915], [585, 945], [590, 975], [610, 980]], 9, 4],
    [[[585, 905], [600, 935], [610, 955], [595, 965], [600, 980]], 10, 2.5],
    [[[560, 880], [575, 900], [578, 940], [565, 960]], 10, 2],
    [[[540, 955], [560, 965], [580, 968], [600, 975]], 8, 4],
    [[[475, 960], [490, 970], [490, 985], [520, 978]], 6, 4],
    [[[505, 950], [530, 955], [545, 970], [560, 985]], 7, 5],
    [[[452, 1045], [462, 1060], [470, 1075]], 7, 2],
    [[[500, 1148], [515, 1158], [540, 1170]], 6, 2],
    [[[425, 1163], [450, 1168], [462, 1190]], 6, 1.5],
    [[[622, 1050], [630, 1080], [640, 1130], [645, 1160], [655, 1196]], 5, 3],
    [[[64, 748], [58, 775], [35, 790], [27, 794]], 5, 1],
    [[[443, 785], [452, 772], [462, 765]], 5, 1.5],
    [[[172, 950], [190, 953], [205, 957]], 4, 0.6],
    [[[412, 865], [440, 860], [480, 862]], 4, 0.6],
    [[[530, 822], [538, 840], [543, 868]], 5, 0.6]
].forEach(([points, amount, width]) => wiggle(creeks, points, 4, amount, width));

const borders = document.getElementById("borders");
wiggle(borders, [[27, 858], [202, 870]], 90, 0, 1);
wiggle(borders, [
    [202, 870], [191, 882], [191, 892], [209, 920], [205, 945], [206, 962], [214, 982], [230, 997],
    [247, 992], [266, 991], [280, 997], [294, 989], [292, 965], [300, 940], [304, 920], [305, 888],
    [311, 862], [300, 845], [295, 822], [288, 808], [292, 788], [290, 768], [295, 758], [308, 752], [307, 748]
], 5, 3, 1.3);
wiggle(borders, [[425, 748], [445, 752], [460, 762], [490, 762], [500, 772], [530, 778], [560, 776], [580, 775], [604, 784]], 5, 5, 1.3);

// Routes are drawn in order, later pins cover earlier ones
const routes = [
    [[475, 883], [472, 893], [463, 908]],
    [[503, 903], [485, 898], [452, 909]],
    [[388, 1030], [398, 1047], [399, 1077], [400, 1097], [400, 1113]],
    [[377, 1028], [372, 1050], [372, 1059]],
    [[445, 1097], [427, 1113], [409, 1126], [390, 1137], [377, 1146]],
    [[413, 1163], [410, 1168], [396, 1168], [402, 1170], [408, 1173]],
    [[553, 1157]],
    [[547, 1147]],
    [[558, 1149]],
    [[373, 778], [368, 776], [366, 780], [364, 787], [385, 809], [398, 825], [401, 850], [393, 867], [381, 882], [370, 897], [359, 913],
    [350, 940], [346, 962], [349, 970], [363, 990], [377, 1010], [385, 1008], [401, 1006], [433, 1003], [453, 1002],
    [480, 994], [505, 996], [522, 996], [550, 999], [585, 1003], [620, 997]],
    [[572, 1046], [590, 1042], [618, 1037]],
    [[623, 997], [630, 1010], [632, 1040], [633, 1063], [632, 1087], [637, 1103], [627, 1120], [602, 1127]],
    [[452, 909], [483, 916], [507, 919], [518, 925], [537, 937], [545, 960], [548, 973], [560, 995], [565, 1030],
    [566, 1080], [568, 1103], [567, 1125]],
    [[463, 908], [457, 930], [442, 948], [437, 977], [433, 998], [433, 1031], [437, 1052], [442, 1070], [455, 1078],
    [492, 1080], [527, 1092], [550, 1093]],
    [[507, 1047], [513, 1055], [513, 1063], [503, 1087], [505, 1108], [518, 1123], [533, 1134]],
    [[618, 1127], [602, 1127], [580, 1133], [558, 1133], [540, 1134]]
];
// Visible holes: x, y and the direction from which a neighbour partly hides it
const holes = [
    [364, 787], [385, 809], [398, 824, 2, 5], [381, 882], [371, 897, -2, 3], [360, 913, -1, 2], [349, 970],
    [385, 1008, 1, 0], [377, 1022], [401, 1006, 1, 0], [453, 1002, 1, 0], [505, 996, 1, 0], [522, 996, 1, 0],
    [483, 916, -1, 0], [507, 919, -1, 0], [518, 925], [537, 937, -2, -1], [560, 995, -2, -3],
    [457, 930, -1, 1], [463, 907], [442, 948], [436, 993, 0, 1], [433, 1031], [436, 1052, 0, 1],
    [455, 1078, 1, 0], [470, 1078, 1, 0], [492, 1080], [527, 1092, -1, 0], [550, 1093, -1, 0],
    [590, 1042, 1, 0], [600, 1040, 1, 0], [609, 1038, 1, 0], [618, 1037, 1, 0], [631, 1021, 0, 1],
    [602, 1126, -1, 0], [627, 1120], [558, 1133, -1, 0], [505, 1108, 0, 1], [513, 1062, 0, 1],
    [518, 1123, 3, 2], [533, 1134], [445, 1099, -1, 1], [409, 1126], [377, 1146], [408, 1173, -1, 0]
];
const pins = document.getElementById("pins");
const shadows = document.getElementById("shadows");

function pin(x, y) {
    add(pins, "path", { d: `M${x.toFixed(1)} ${(y + 19).toFixed(1)}c-2-5-12-10-12-19a12 12 0 1 1 24 0c0 9-10 14-12 19Z` });
}

routes.forEach(points => walk(points, 4, (x, y) => {
    add(shadows, "ellipse", { cx: x, cy: y + 20, rx: 11, ry: 5 });
    pin(x + random() * 2, y + random() * 2);
}));
holes.forEach(([x, y, dx, dy]) => {
    if (dx === undefined) {
        pin(x, y);
        add(pins, "circle", { class: "hole", cx: x, cy: y, r: 5 });
        return;
    }
    const length = Math.hypot(dx, dy);
    add(pins, "circle", { class: "hole", cx: x, cy: y, r: 5 });
    add(pins, "circle", { cx: x + dx / length * 11, cy: y + dy / length * 11, r: 11 });
});
```
